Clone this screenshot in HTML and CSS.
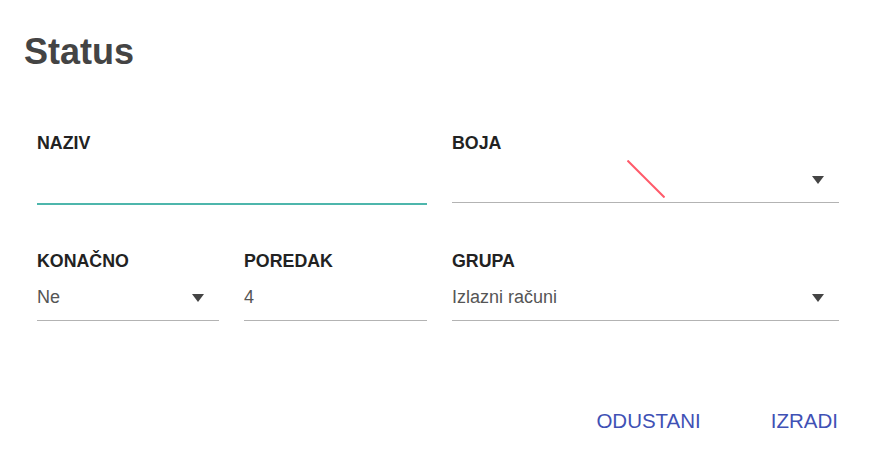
FILE: index.html
```html
<!DOCTYPE html>
<html lang="hr">

<head>
    <meta charset="utf-8">
    <title>Status</title>
    <link rel="stylesheet" href="styles.css">
</head>

<body>
    <div class="dialog">
        <h1 class="dialog-title">Status</h1>

        <form class="status-form">
            <div class="field field-wide">
                <label class="field-label">NAZIV</label>
                <div class="field-input focused"></div>
            </div>

            <div class="field">
                <label class="field-label">BOJA</label>
                <div class="field-input color-select">
                    <span></span>
                    <svg class="swatch" width="38" height="38" viewBox="0 0 38 38">
                        <line x1="0.5" y1="0.5" x2="37.5" y2="37.5" stroke="#ff5a6a" stroke-width="2" />
                    </svg>
                    <span class="arrow"></span>
                </div>
            </div>

            <div class="field">
                <label class="field-label">KONAČNO</label>
                <div class="field-input select">
                    <span class="value">Ne</span>
                    <span class="arrow"></span>
                </div>
            </div>

            <div class="field">
                <label class="field-label">POREDAK</label>
                <div class="field-input">
                    <span class="value">4</span>
                </div>
            </div>

            <div class="field">
                <label class="field-label">GRUPA</label>
                <div class="field-input select">
                    <span class="value">Izlazni računi</span>
                    <span class="arrow"></span>
                </div>
            </div>
        </form>

        <div class="dialog-actions">
            <button class="text-btn" type="button">ODUSTANI</button>
            <button class="text-btn" type="button">IZRADI</button>
        </div>
    </div>
</body>

</html>
```

FILE: styles.css
```css
body {
    margin: 0;
    padding: 0;
    background-color: #ffffff;
    font-family: "Liberation Sans", Arial, sans-serif;
}

.dialog {
    padding-top: 32px;
}

.dialog-title {
    margin: 0;
    padding-left: 24px;
    font-size: 36px;
    line-height: 40px;
    font-weight: bold;
    color: #444444;
}

.status-form {
    display: grid;
    grid-template-columns: 182px 183px 1fr;
    column-gap: 25px;
    row-gap: 46px;
    margin-top: 61px;
    padding: 0 39px 0 37px;
}

.field-wide {
    grid-column: span 2;
}

.field:nth-child(3) {
    grid-column: 1;
}

.field-label {
    display: block;
    height: 20px;
    font-size: 17.8px;
    line-height: 20px;
    font-weight: bold;
    color: #222222;
}

.field-input {
    display: flex;
    align-items: center;
    height: 50px;
    box-sizing: border-box;
    padding-top: 2px;
    border-bottom: 1px solid #b3b3b3;
}

/* active input gets the teal underline */
.field-input.focused {
    border-bottom: 2px solid #4db6ac;
    height: 52px;
    padding-top: 3px;
}

.value {
    font-size: 18px;
    line-height: 22px;
    color: #555555;
}

.select {
    justify-content: space-between;
    padding-right: 15px;
}

.color-select {
    display: grid;
    grid-template-columns: 1fr auto 1fr;
    padding: 2px 15px 0 15px;
}

.color-select .arrow {
    justify-self: end;
}

.swatch {
    display: block;
}

.arrow {
    width: 0;
    height: 0;
    border-left: 6px solid transparent;
    border-right: 6px solid transparent;
    border-top: 8px solid #444444;
    margin-top: 2px;
}

.dialog-actions {
    display: flex;
    justify-content: flex-end;
    gap: 38px;
    margin-top: 82px;
    padding-right: 24px;
}

.text-btn {
    background: none;
    border: none;
    padding: 0 16px;
    height: 36px;
    font-family: "Liberation Sans", Arial, sans-serif;
    font-size: 20.5px;
    line-height: 36px;
    color: #3f51b5;
    cursor: pointer;
}
```
